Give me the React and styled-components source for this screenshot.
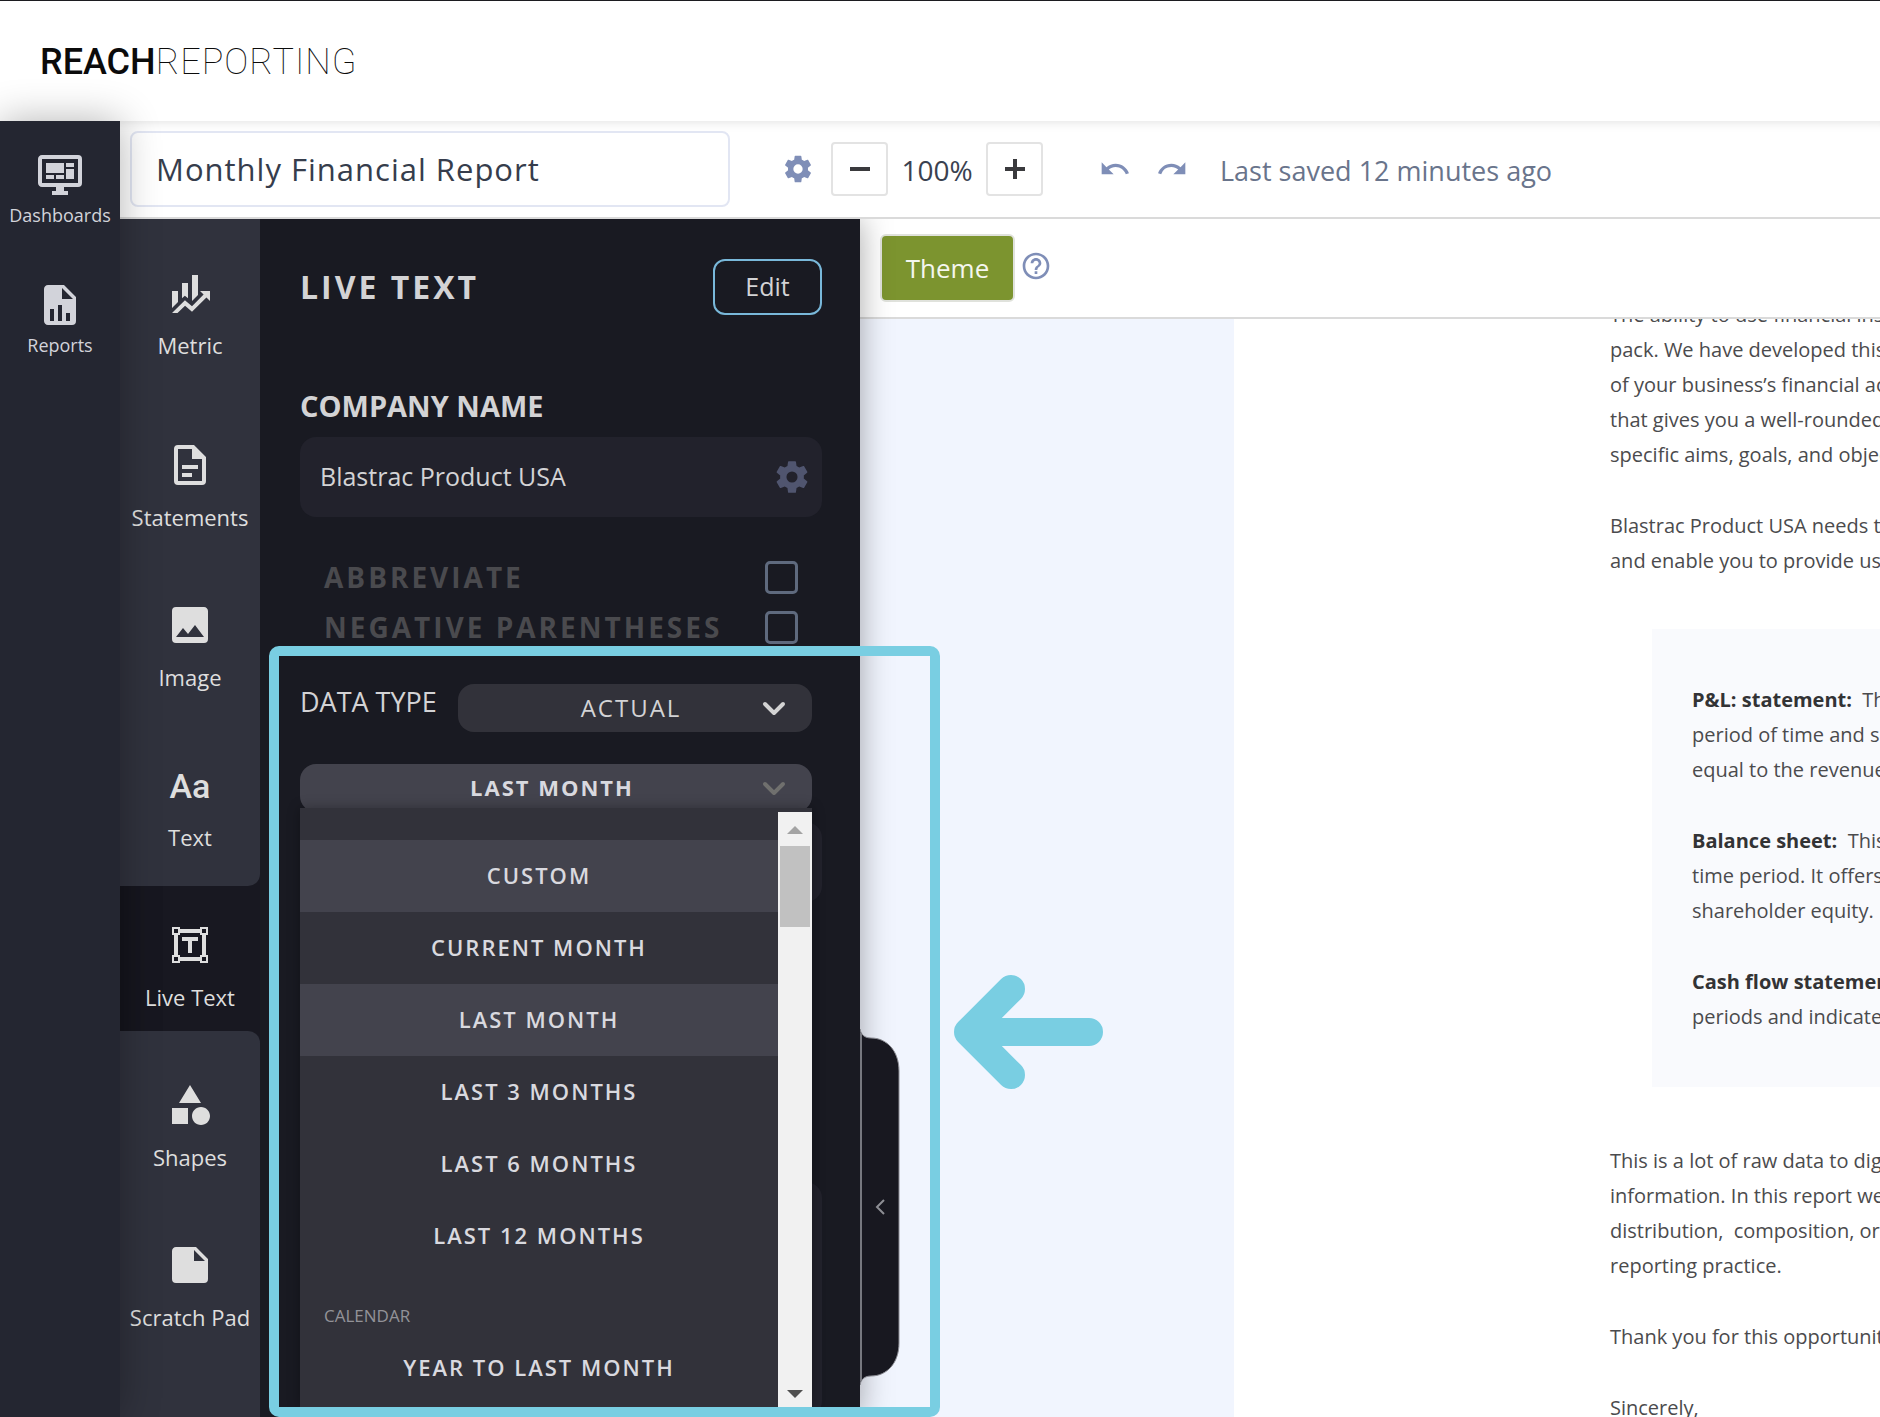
import React, { useState } from "react";
import styled, { createGlobalStyle } from "styled-components";
import { MdUndo, MdRedo, MdHelpOutline } from "react-icons/md";

const GlobalStyle = createGlobalStyle`
  *, *::before, *::after { box-sizing: border-box; }
  body { margin: 0; font-family: "Open Sans", "Noto Sans", sans-serif; }
  button, input, select { font: inherit; color: inherit; }
  button { cursor: pointer; }
`;

const paths = {
  dashboard:
    "M21,16V4H3V16H21M21,2A2,2 0 0,1 23,4V16A2,2 0 0,1 21,18H14V20H16V22H8V20H10V18H3C1.89,18 1,17.1 1,16V4C1,2.89 1.89,2 3,2H21M5,6H14V11H5V6M15,6H19V8H15V6M19,9V14H15V9H19M5,12H9V14H5V12M10,12H14V14H10V12Z",
  report:
    "M13,9H18.5L13,3.5V9M6,2H14L20,8V20A2,2 0 0,1 18,22H6C4.89,22 4,21.1 4,20V4C4,2.89 4.89,2 6,2M7,20H9V14H7V20M11,20H13V12H11V20M15,20H17V16H15V20Z",
  metric:
    "M6,16.5L3,19.44V11H6M11,14.66L9.43,13.32L8,14.64V7H11M16,13L13,16V3H16M18.81,12.81L17,11H22V16L20.21,14.21L13,21.36L9.53,18.34L5.75,22H3L9.47,15.66L13,18.64",
  statement:
    "M6,2A2,2 0 0,0 4,4V20A2,2 0 0,0 6,22H18A2,2 0 0,0 20,20V8L14,2H6M6,4H13V9H18V20H6V4M8,12V14H16V12H8M8,16V18H13V16H8Z",
  image:
    "M8.5,13.5L11,16.5L14.5,12L19,18H5M21,19V5C21,3.89 20.1,3 19,3H5A2,2 0 0,0 3,5V19A2,2 0 0,0 5,21H19A2,2 0 0,0 21,19Z",
  liveText:
    "M3,3H7V4H17V3H21V7H20V17H21V21H17V20H7V21H3V17H4V7H3V3M7,6V7H6V17H7V18H17V17H18V7H17V6H7M4,4V6H6V4H4M18,4V6H20V4H18M4,18V20H6V18H4M18,18V20H20V18H18M8,8H16V10H13V16H11V10H8V8Z",
  shapes:
    "M11,13.5V21.5H3V13.5H11M12,2L17.5,11H6.5L12,2M17.5,13C20,13 22,15 22,17.5C22,20 20,22 17.5,22C15,22 13,20 13,17.5C13,15 15,13 17.5,13Z",
  note:
    "M14,10V4.5L19.5,10M5,3C3.89,3 3,3.89 3,5V19A2,2 0 0,0 5,21H19A2,2 0 0,0 21,19V9L15,3H5Z",
  cog:
    "M12,15.5A3.5,3.5 0 0,1 8.5,12A3.5,3.5 0 0,1 12,8.5A3.5,3.5 0 0,1 15.5,12A3.5,3.5 0 0,1 12,15.5M19.43,12.97C19.47,12.65 19.5,12.33 19.5,12C19.5,11.67 19.47,11.34 19.43,11L21.54,9.37C21.73,9.22 21.78,8.95 21.66,8.73L19.66,5.27C19.54,5.05 19.27,4.96 19.05,5.05L16.56,6.05C16.04,5.66 15.5,5.32 14.87,5.07L14.5,2.42C14.46,2.18 14.25,2 14,2H10C9.75,2 9.54,2.18 9.5,2.42L9.13,5.07C8.5,5.32 7.96,5.66 7.44,6.05L4.95,5.05C4.73,4.96 4.46,5.05 4.34,5.27L2.34,8.73C2.21,8.95 2.27,9.22 2.46,9.37L4.57,11C4.53,11.34 4.5,11.67 4.5,12C4.5,12.33 4.53,12.65 4.57,12.97L2.46,14.63C2.27,14.78 2.21,15.05 2.34,15.27L4.34,18.73C4.46,18.95 4.73,19.03 4.95,18.95L7.44,17.94C7.96,18.34 8.5,18.68 9.13,18.93L9.5,21.58C9.54,21.82 9.75,22 10,22H14C14.25,22 14.46,21.82 14.5,21.58L14.87,18.93C15.5,18.67 16.04,18.34 16.56,17.94L19.05,18.95C19.27,19.03 19.54,18.95 19.66,18.73L21.66,15.27C21.78,15.05 21.73,14.78 21.54,14.63L19.43,12.97Z",
};

const Icon = ({ name, size = 48 }) => (
  <svg width={size} height={size} viewBox="0 0 24 24" fill="currentColor" fillRule="evenodd" aria-hidden="true">
    <path d={paths[name]} />
  </svg>
);

const Chevron = () => (
  <svg width="24" height="16" viewBox="0 0 24 16" fill="none" stroke="currentColor" strokeWidth="4" strokeLinecap="round" strokeLinejoin="round" aria-hidden="true">
    <path d="M3 3l9 9 9-9" />
  </svg>
);

/* ---------- shell ---------- */

const Shell = styled.div`
  display: flex;
  flex-direction: column;
  height: 100vh;
  overflow: hidden;
  background: #fff;
`;

const Header = styled.header`
  flex: none;
  display: flex;
  align-items: center;
  height: 121px;
  padding: 2px 40px 0;
  border-top: 1px solid #1c1c20;
`;

const Logo = styled.a`
  font: 500 36px/48px Roboto, sans-serif;
  color: #0b0b0b;
  text-decoration: none;
  span { font-weight: 100; letter-spacing: 1px; }
`;

const Body = styled.div`
  flex: 1;
  min-height: 0;
  display: flex;
`;

const Rail = styled.nav`
  position: relative;
  z-index: 3;
  flex: none;
  display: flex;
  flex-direction: column;
  gap: 42px;
  width: 120px;
  padding-top: 30px;
  background: #242631;
  box-shadow: 0 0 40px rgba(0, 0, 0, 0.3);
`;

const RailLink = styled.a`
  display: flex;
  flex-direction: column;
  align-items: center;
  height: 88px;
  color: #d2d3da;
  font-size: 18px;
  line-height: 32px;
  text-decoration: none;
`;

const Main = styled.main`
  flex: 1;
  min-width: 0;
  display: flex;
  flex-direction: column;
`;

/* ---------- toolbar ---------- */

const Toolbar = styled.div`
  flex: none;
  display: flex;
  align-items: center;
  height: 98px;
  padding: 0 10px;
  border-bottom: 2px solid #dadada;
  box-shadow: inset 0 12px 12px -12px rgba(0, 0, 0, 0.14);
`;

const TitleInput = styled.input`
  width: 600px;
  height: 76px;
  margin-right: 52px;
  padding: 0 24px;
  border: 2px solid #e2e6f3;
  border-radius: 8px;
  background: transparent;
  color: #363d4c;
  font-size: 31px;
  letter-spacing: 1px;
`;

const IconButton = styled.button`
  display: flex;
  padding: 0;
  border: 0;
  background: none;
  color: #7f8eb7;
`;

const ZoomGroup = styled.div`
  display: flex;
  align-items: center;
  margin: 0 56px 0 17px;
  color: #3a4150;
  font-size: 28px;
`;

const ZoomValue = styled.output`
  width: 98px;
  padding-top: 2px;
  text-align: center;
`;

const ZoomButton = styled.button`
  display: flex;
  align-items: center;
  justify-content: center;
  width: 57px;
  height: 54px;
  padding: 0;
  border: 2px solid #e3e3e3;
  border-radius: 4px;
  background: #fff;
  color: #3a3a3d;
`;

const History = styled.div`
  display: flex;
  gap: 25px;
`;

const Saved = styled.span`
  margin-left: 32px;
  padding-top: 2px;
  color: #69748b;
  font-size: 27px;
  white-space: nowrap;
`;

const Work = styled.div`
  flex: 1;
  min-height: 0;
  display: flex;
`;

/* ---------- element picker ---------- */

const Picker = styled.nav`
  flex: none;
  display: flex;
  flex-direction: column;
  width: 140px;
  background: #181821;
  box-shadow: inset 40px 0 40px -40px rgba(0, 0, 0, 0.3);
`;

const PickerGroup = styled.div`
  display: flex;
  flex-direction: column;
  gap: 16px;
  background: #30323d;
  ${(p) => (p.$end ? "flex: 1; border-top-right-radius: 12px; padding-top: 15px;" : "border-bottom-right-radius: 12px; padding: 16px 0;")}
`;

const PickerItem = styled.button`
  display: flex;
  flex-direction: column;
  align-items: center;
  gap: 14px;
  height: 144px;
  padding: 35px 0 0;
  border: 0;
  background: none;
  color: #dedede;
  font-size: 22px;
  line-height: 28px;
  white-space: nowrap;
`;

const FirstItem = styled(PickerItem)`
  height: 155px;
  padding-top: 34px;
`;

const ActiveItem = styled(PickerItem)`
  height: 145px;
`;

const Letters = styled.span`
  height: 48px;
  font: 500 34px/50px Roboto, sans-serif;
`;

/* ---------- settings panel ---------- */

const Panel = styled.section`
  position: relative;
  z-index: 2;
  flex: none;
  display: flex;
  flex-direction: column;
  width: 600px;
  padding: 40px 38px 0 40px;
  background: #191a22;
  color: #d3d3d5;
  box-shadow: 0 0 30px rgba(0, 0, 0, 0.35);
  clip-path: inset(0 -120px 0 0);
`;

const PanelHead = styled.div`
  display: flex;
  justify-content: space-between;
  align-items: center;
  height: 56px;
`;

const PanelTitle = styled.h1`
  margin: 0;
  padding-bottom: 2px;
  font-size: 32px;
  font-weight: 700;
  letter-spacing: 3px;
`;

const EditButton = styled.button`
  width: 109px;
  height: 56px;
  padding: 0 0 2px;
  border: 2px solid #79b8da;
  border-radius: 12px;
  background: none;
  font-size: 25px;
`;

const FieldLabel = styled.label`
  margin-top: 75px;
  font-size: 29px;
  font-weight: 700;
  line-height: 32px;
`;

const Field = styled.div`
  display: flex;
  align-items: center;
  height: 80px;
  margin-top: 15px;
  padding: 0 11px 0 20px;
  border-radius: 16px;
  background: #22222c;
  ${IconButton} { color: #50556f; }
`;

const FieldInput = styled.input`
  flex: 1;
  min-width: 0;
  border: 0;
  background: none;
  padding: 0 0 2px;
  font-size: 25px;
`;

const Checks = styled.div`
  margin-top: 35px;
  padding: 0 24px;
`;

const CheckRow = styled.label`
  display: flex;
  justify-content: space-between;
  align-items: center;
  height: 50px;
  color: #4a4a4e;
  font-size: 28px;
  font-weight: 700;
  letter-spacing: 3px;
  white-space: nowrap;
`;

const CheckBox = styled.input`
  appearance: none;
  width: 33px;
  height: 33px;
  margin: 0;
  border: 3px solid #5f6a7e;
  border-radius: 5px;
`;

const DataRow = styled.div`
  display: flex;
  justify-content: space-between;
  margin: 32px 10px 0 0;
`;

const DataLabel = styled.label`
  font-size: 27px;
  line-height: 36px;
`;

const SelectBox = styled.div`
  position: relative;
  width: ${(p) => (p.$wide ? "auto" : "354px")};
  margin: ${(p) => (p.$wide ? "32px 10px 0 0" : "0")};
  color: ${(p) => (p.$wide ? "#70706e" : "#d3d3d3")};
  & > svg {
    position: absolute;
    top: 17px;
    right: 26px;
    pointer-events: none;
  }
`;

const Select = styled.select`
  display: block;
  appearance: none;
  width: 100%;
  height: 48px;
  padding: 0 8px 2px 0;
  border: 0;
  border-radius: 16px;
  background: #32323a;
  color: #d3d3d5;
  font-size: 24px;
  letter-spacing: 2px;
  text-align: center;
  text-align-last: center;
`;

const PeriodButton = styled.button`
  display: block;
  width: 100%;
  height: 48px;
  padding: 0 8px 2px 0;
  border: 0;
  border-radius: 16px;
  background: #43434d;
  color: #d9d9df;
  font-size: 22px;
  font-weight: 700;
  letter-spacing: 2px;
`;

const Menu = styled.div`
  position: absolute;
  z-index: 1;
  top: 44px;
  left: 0;
  right: 0;
  display: flex;
  background: #32323a;
  box-shadow: 0 0 12px rgba(0, 0, 0, 0.3);
`;

const Options = styled.div`
  flex: 1;
  padding: 32px 0 3px;
`;

const Option = styled.button`
  display: block;
  width: 100%;
  height: 72px;
  padding: 0 0 2px;
  border: 0;
  background: ${(p) => (p.$lit ? "#43434d" : "transparent")};
  color: #d9d9df;
  font-size: 22px;
  font-weight: 600;
  letter-spacing: 2px;
`;

const OptionGroup = styled.div`
  height: 60px;
  padding: 28px 24px 0;
  color: #929298;
  font-size: 17px;
  line-height: 32px;
`;

const ScrollTrack = styled.div`
  display: flex;
  flex-direction: column;
  align-items: center;
  width: 34px;
  margin-top: 4px;
  padding: 14px 0 9px;
  background: #f1f1f1;
`;

const ScrollThumb = styled.div`
  width: 30px;
  height: 81px;
  margin: 12px 0 auto;
  background: #c1c1c1;
`;

const Placeholder = styled.div`
  flex: ${(p) => (p.$fill ? "1 0 0" : "none")};
  height: 80px;
  margin-top: ${(p) => (p.$fill ? "280px" : "10px")};
  border-radius: 16px;
  background: #22222c;
`;

const Highlight = styled.div`
  position: absolute;
  z-index: 4;
  top: 427px;
  bottom: 0;
  left: 9px;
  right: -80px;
  border: 10px solid #79cee2;
  border-radius: 10px;
  pointer-events: none;
`;

const CollapseButton = styled.button`
  position: absolute;
  top: 808px;
  left: 100%;
  padding: 0;
  border: 0;
  background: none;
  svg { display: block; }
`;

/* ---------- document ---------- */

const Stage = styled.div`
  flex: 1;
  min-width: 0;
  display: flex;
  flex-direction: column;
`;

const ThemeBar = styled.div`
  flex: none;
  display: flex;
  align-items: flex-start;
  gap: 5px;
  height: 100px;
  padding: 15px 20px;
  border-bottom: 2px solid #dadada;
  ${IconButton} { margin-top: 16px; }
`;

const ThemeButton = styled.button`
  width: 135px;
  height: 68px;
  padding: 0;
  border: 2px solid #e0e2dc;
  border-radius: 6px;
  background: #7c942f;
  color: #f4f6ee;
  font-size: 26px;
`;

const Canvas = styled.div`
  position: relative;
  flex: 1;
  min-height: 0;
  padding-left: 374px;
  background: #f1f5fe;
  overflow: hidden;
`;

const Page = styled.article`
  display: flex;
  flex-direction: column;
  gap: 36px;
  min-height: 100%;
  margin-top: -22px;
  padding-left: 376px;
  background: #fff;
  color: #4b4b4d;
  font-size: 20px;
  line-height: 35px;
  overflow: hidden;
  white-space: pre;
`;

const Para = styled.p`
  margin: 0;
`;

const Callout = styled.section`
  display: flex;
  flex-direction: column;
  gap: 36px;
  margin: 15px 0 20px 42px;
  padding: 53px 40px;
  background: #f9fafd;
  strong { color: #333335; }
`;

const Pointer = styled.svg`
  position: absolute;
  top: 656px;
  left: 94px;
`;

const Lines = ({ text }) => <Para>{text.join("\n")}</Para>;

const topItems = [
  ["statement", "Statements"],
  ["image", "Image"],
];
const endItems = [
  ["shapes", "Shapes"],
  ["note", "Scratch Pad"],
];
const periods = ["CUSTOM", "CURRENT MONTH", "LAST MONTH", "LAST 3 MONTHS", "LAST 6 MONTHS", "LAST 12 MONTHS"];

export default function App() {
  const [title, setTitle] = useState("Monthly Financial Report");
  const [company, setCompany] = useState("Blastrac Product USA");
  const [period, setPeriod] = useState("LAST MONTH");
  const [zoom, setZoom] = useState(100);

  return (
    <Shell>
      <GlobalStyle />
      <Header>
        <Logo href="#home">REACH<span>REPORTING</span></Logo>
      </Header>
      <Body>
        <Rail aria-label="Main">
          <RailLink href="#dashboards"><Icon name="dashboard" />Dashboards</RailLink>
          <RailLink href="#reports"><Icon name="report" />Reports</RailLink>
        </Rail>
        <Main>
          <Toolbar>
            <TitleInput aria-label="Report title" value={title} onChange={(e) => setTitle(e.target.value)} />
            <IconButton aria-label="Report settings"><Icon name="cog" size={32} /></IconButton>
            <ZoomGroup>
              <ZoomButton aria-label="Zoom out" onClick={() => setZoom(zoom - 10)}>
                <svg width="20" height="20" viewBox="0 0 20 20" stroke="currentColor" strokeWidth="4"><path d="M0 10h20" /></svg>
              </ZoomButton>
              <ZoomValue>{zoom}%</ZoomValue>
              <ZoomButton aria-label="Zoom in" onClick={() => setZoom(zoom + 10)}>
                <svg width="20" height="20" viewBox="0 0 20 20" stroke="currentColor" strokeWidth="4"><path d="M0 10h20M10 0v20" /></svg>
              </ZoomButton>
            </ZoomGroup>
            <History>
              <IconButton aria-label="Undo"><MdUndo size={32} /></IconButton>
              <IconButton aria-label="Redo"><MdRedo size={32} /></IconButton>
            </History>
            <Saved>Last saved 12 minutes ago</Saved>
          </Toolbar>
          <Work>
            <Picker aria-label="Elements">
              <PickerGroup>
                <FirstItem><Icon name="metric" />Metric</FirstItem>
                {topItems.map(([icon, label]) => (
                  <PickerItem key={label}><Icon name={icon} />{label}</PickerItem>
                ))}
                <PickerItem><Letters aria-hidden="true">Aa</Letters>Text</PickerItem>
              </PickerGroup>
              <ActiveItem aria-pressed="true"><Icon name="liveText" />Live Text</ActiveItem>
              <PickerGroup $end>
                {endItems.map(([icon, label]) => (
                  <PickerItem key={label}><Icon name={icon} />{label}</PickerItem>
                ))}
              </PickerGroup>
            </Picker>
            <Panel>
              <PanelHead>
                <PanelTitle>LIVE TEXT</PanelTitle>
                <EditButton>Edit</EditButton>
              </PanelHead>
              <FieldLabel htmlFor="company">COMPANY NAME</FieldLabel>
              <Field>
                <FieldInput id="company" value={company} onChange={(e) => setCompany(e.target.value)} />
                <IconButton aria-label="Company settings"><Icon name="cog" size={38} /></IconButton>
              </Field>
              <Checks>
                <CheckRow>ABBREVIATE<CheckBox type="checkbox" /></CheckRow>
                <CheckRow>NEGATIVE PARENTHESES<CheckBox type="checkbox" /></CheckRow>
              </Checks>
              <DataRow>
                <DataLabel htmlFor="data-type">DATA TYPE</DataLabel>
                <SelectBox>
                  <Select id="data-type" defaultValue="ACTUAL"><option>ACTUAL</option></Select>
                  <Chevron />
                </SelectBox>
              </DataRow>
              <SelectBox $wide>
                <PeriodButton aria-haspopup="listbox" aria-expanded="true">{period}</PeriodButton>
                <Chevron />
                <Menu>
                  <Options role="listbox" aria-label="Period">
                    {periods.map((p, i) => (
                      <Option key={p} role="option" aria-selected={p === period} $lit={i === 0 || p === period} onClick={() => setPeriod(p)}>{p}</Option>
                    ))}
                    <OptionGroup>CALENDAR</OptionGroup>
                    <Option role="option" aria-selected="false" onClick={() => setPeriod("YEAR TO LAST MONTH")}>YEAR TO LAST MONTH</Option>
                  </Options>
                  <ScrollTrack aria-hidden="true">
                    <svg width="16" height="8" viewBox="0 0 16 8" fill="#a3a3a3"><path d="M0 8l8-8 8 8z" /></svg>
                    <ScrollThumb />
                    <svg width="16" height="8" viewBox="0 0 16 8" fill="#505050"><path d="M0 0l8 8 8-8z" /></svg>
                  </ScrollTrack>
                </Menu>
              </SelectBox>
              <Placeholder />
              <Placeholder $fill />
              <CollapseButton aria-label="Collapse panel">
                <svg width="40" height="360" viewBox="0 0 40 360">
                  <path d="M0 2C1 8 5 11 11 11C27 11 39 24 39 44V316C39 336 27 349 11 349C5 349 1 352 0 358Z" fill="#181820" stroke="#8a8b92" strokeWidth="1" />
                  <path d="M1 6V354" stroke="#77787f" strokeWidth="2" />
                  <path d="M24 173l-7 7 7 7" fill="none" stroke="#8d8e94" strokeWidth="2" />
                </svg>
              </CollapseButton>
              <Highlight />
            </Panel>
            <Stage>
              <ThemeBar>
                <ThemeButton>Theme</ThemeButton>
                <IconButton aria-label="Help"><MdHelpOutline size={32} /></IconButton>
              </ThemeBar>
              <Canvas>
                <Page>
                  <Lines text={[
                    "The ability to use financial insights",
                    "pack. We have developed this",
                    "of your business’s financial activity",
                    "that gives you a well-rounded",
                    "specific aims, goals, and objectives",
                  ]} />
                  <Lines text={["Blastrac Product USA needs to", "and enable you to provide us"]} />
                  <Callout>
                    <Para><strong>P&amp;L: statement:</strong>{"  This\nperiod of time and shows\nequal to the revenue"}</Para>
                    <Para><strong>Balance sheet:</strong>{"  This\ntime period. It offers\nshareholder equity."}</Para>
                    <Para><strong>Cash flow statement:</strong>{"\nperiods and indicates"}</Para>
                  </Callout>
                  <Lines text={[
                    "This is a lot of raw data to digest",
                    "information. In this report we",
                    "distribution,  composition, or",
                    "reporting practice.",
                  ]} />
                  <Para>Thank you for this opportunity</Para>
                  <Para>Sincerely,</Para>
                </Page>
                <Pointer width="150" height="114" viewBox="0 0 150 114" fill="none" stroke="#79cee2" strokeWidth="28" strokeLinecap="round" strokeLinejoin="round" aria-hidden="true">
                  <path d="M135 57H14M57 14L14 57L57 100" />
                </Pointer>
              </Canvas>
            </Stage>
          </Work>
        </Main>
      </Body>
    </Shell>
  );
}
